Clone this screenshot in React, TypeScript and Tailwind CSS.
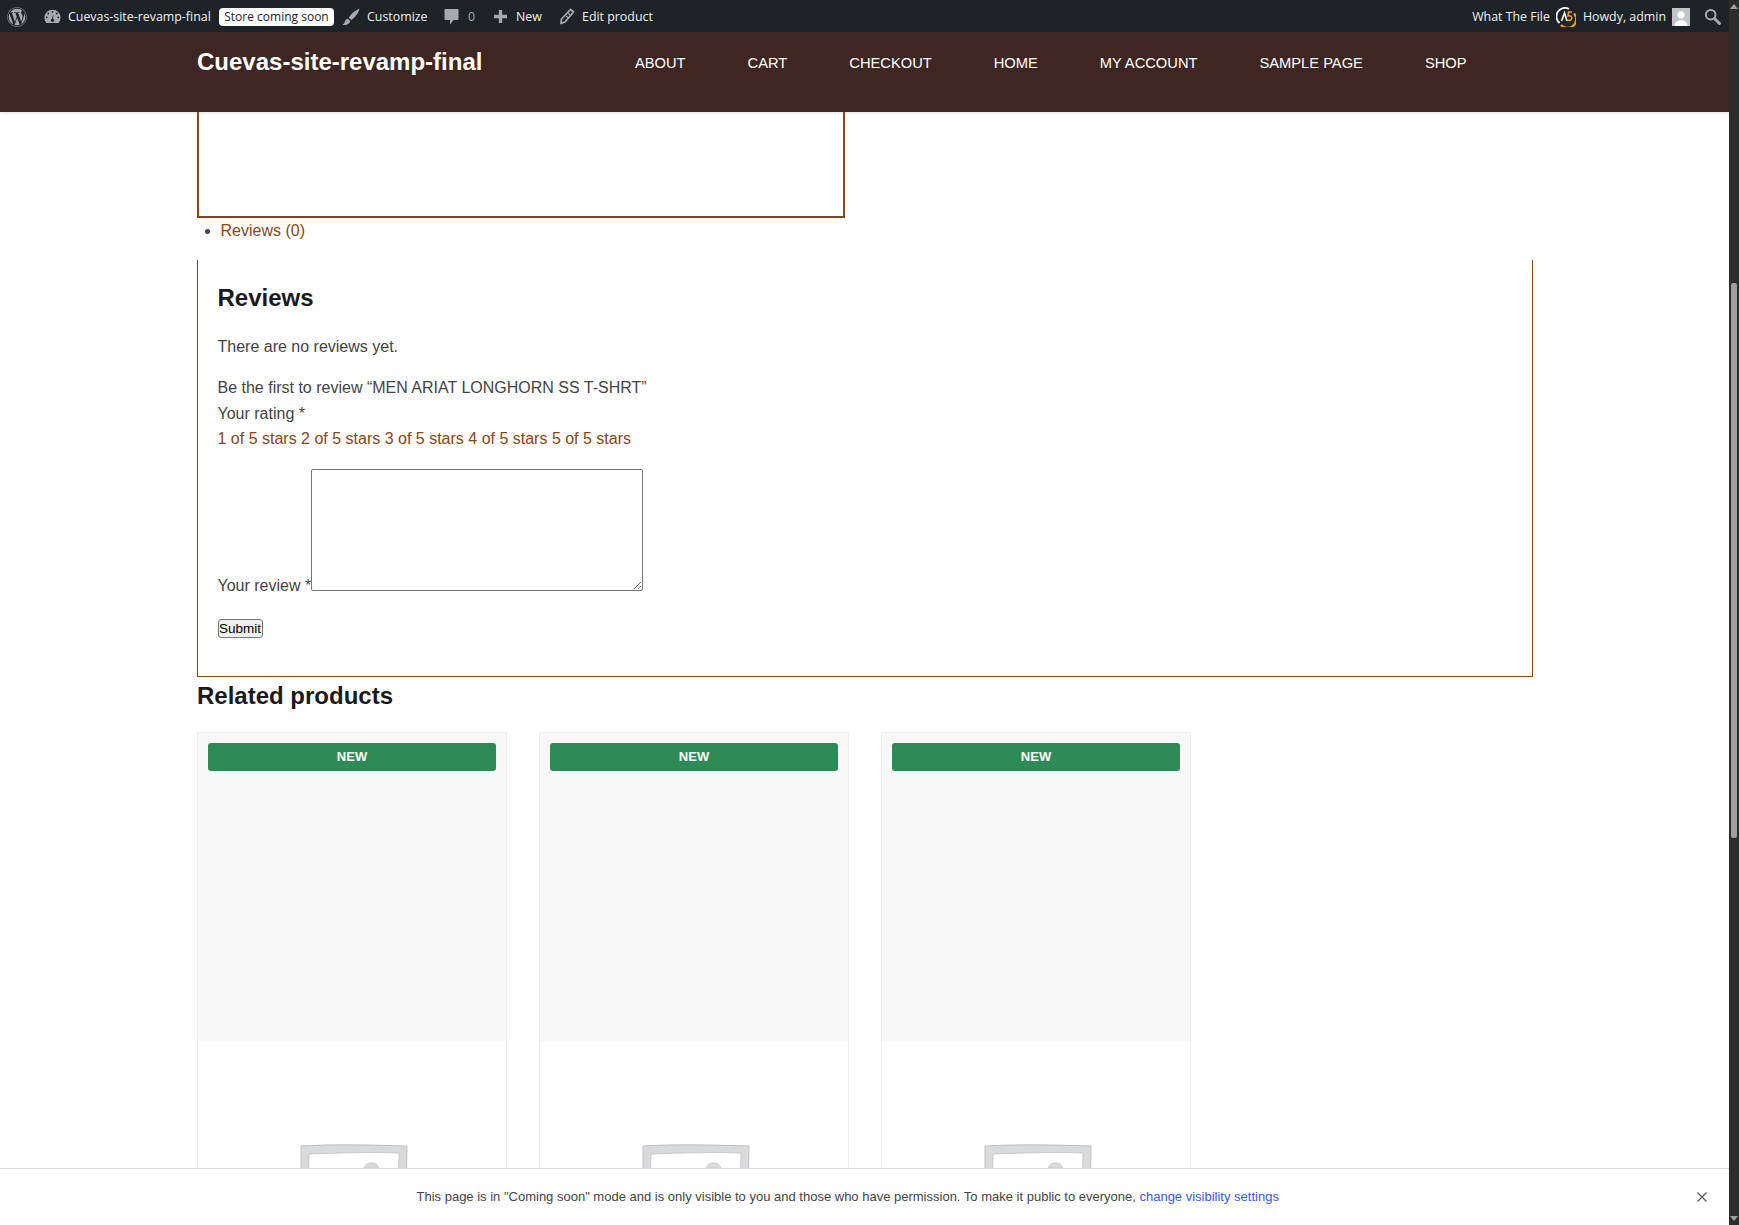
import React from "react";
import { FaWordpress } from "react-icons/fa";

const sans = "font-['Liberation_Sans',Arial,sans-serif]";
const bar = "font-['Open_Sans','Noto_Sans',sans-serif]";

function Gauge() {
  return (
    <svg width="17" height="17" viewBox="0 0 20 20" className="fill-[#a7aaad]">
      <path d="M10 2a9.500 9.500 0 0 0-9.500 9.500c0 2.300.8 4.400 2.200 6h14.600a9.400 9.400 0 0 0 2.200-6A9.500 9.500 0 0 0 10 2z" />
      <circle cx="10" cy="4.500" r="1.100" className="fill-[#1d2327]" />
      <circle cx="5" cy="6.500" r="1.100" className="fill-[#1d2327]" />
      <circle cx="15" cy="6.500" r="1.100" className="fill-[#1d2327]" />
      <circle cx="3.200" cy="11" r="1.100" className="fill-[#1d2327]" />
      <circle cx="16.800" cy="11" r="1.100" className="fill-[#1d2327]" />
      <path d="M11 7l-1.800 6.200 1.600.5z" className="fill-[#1d2327]" />
      <circle cx="10" cy="14.500" r="2" className="fill-[#1d2327]" />
    </svg>
  );
}
function Brush() {
  return (
    <svg width="18" height="18" viewBox="0 0 18 18" className="fill-[#a7aaad]">
      <path d="M17.500.5C14 2 9 5.500 6.800 9.800l2.400 2.200C13 9.500 16.500 5 17.500.5z" />
      <path d="M5.800 10.800c-1.800.3-2.600 1.600-2.900 3-.2 1.200-1 2-2.400 3.200 2.800.3 6.800-.5 7.500-3.600.1-.5 0-1-.2-1z" />
    </svg>
  );
}
function Bubble() {
  return (
    <svg width="15" height="17" viewBox="0 0 15 17" className="fill-[#a7aaad]">
      <path d="M1.500 1h12a1 1 0 0 1 1 1v9a1 1 0 0 1-1 1H9.500L6 16.500V12H1.500a1 1 0 0 1-1-1V2a1 1 0 0 1 1-1z" />
    </svg>
  );
}
function Plus() {
  return (
    <svg width="15" height="15" viewBox="0 0 15 15" className="fill-[#a7aaad]">
      <path d="M5.800 1h3.400v4.800H14v3.400H9.200V14H5.800V9.200H1V5.800h4.800z" />
    </svg>
  );
}
function Pencil() {
  return (
    <svg width="16" height="17" viewBox="0 0 16 17" className="fill-none stroke-[#a7aaad]">
      <path d="M11.500 1.500l3 2.500-8.500 10-4 1.500.5-4.500z" strokeWidth="1.800" strokeLinejoin="round" />
      <path d="M9 5l3 2.500M7 8l2.500 2" strokeWidth="1.200" />
    </svg>
  );
}
function Search() {
  return (
    <svg width="17" height="17" viewBox="0 0 17 17" className="fill-none stroke-[#a7aaad]">
      <circle cx="6.700" cy="6.700" r="4.800" strokeWidth="2" />
      <path d="M10.500 10.500l5 5" strokeWidth="3" strokeLinecap="round" />
    </svg>
  );
}
function Logo() {
  return (
    <svg width="20" height="20" viewBox="0 0 20 20" className="fill-none">
      <path d="M3.500 16A8.500 8.500 0 0 1 13 2" stroke="#fff" strokeWidth="1.800" />
      <path d="M18 6.500a8.500 8.500 0 0 1-13 11.500" stroke="#f59e1b" strokeWidth="2.200" />
      <path d="M5.500 14l3-8 2.500 8" stroke="#fff" strokeWidth="1.600" />
      <path d="M16 5h-3.500l-.5 4c2-.8 4 0 3.800 2.200-.2 2-2.600 2.800-4.300 1.600" stroke="#f59e1b" strokeWidth="1.500" />
    </svg>
  );
}
function Avatar() {
  return (
    <svg width="18" height="18" viewBox="0 0 18 18" className="block">
      <rect width="18" height="18" fill="#c3c4c7" />
      <circle cx="9" cy="6.800" r="3.600" fill="#fff" />
      <path d="M2.500 18c.3-4 3-5.800 6.500-5.800s6.200 1.800 6.500 5.800z" fill="#fff" />
    </svg>
  );
}

function AdminBar() {
  return (
    <div className={`${bar} flex h-8 shrink-0 items-center bg-[#1d2327] pt-[1px] text-[12.400px] text-[#f0f0f1]`}>
      <FaWordpress className="ml-[7px] text-[20px] text-[#a7aaad]" />
      <span className="ml-[17px]"><Gauge /></span>
      <span className="ml-[7px] w-[143px] whitespace-nowrap pt-[1px]">Cuevas-site-revamp-final</span>
      <span className="ml-2 flex h-[18px] w-[115px] items-center justify-center whitespace-nowrap rounded-sm bg-white text-[12px] text-[#1d2327]">Store coming soon</span>
      <span className="ml-2"><Brush /></span>
      <span className="ml-[7px] w-[60px] whitespace-nowrap pt-[1px]">Customize</span>
      <span className="ml-[17px]"><Bubble /></span>
      <span className="ml-[9px] w-[8px] pt-[1px] text-[#a7aaad]">0</span>
      <span className="ml-[17px]"><Plus /></span>
      <span className="ml-[8px] w-[27px] pt-[1px]">New</span>
      <span className="ml-[16px]"><Pencil /></span>
      <span className="ml-[7px] whitespace-nowrap pt-[1px]">Edit product</span>
      <span className="ml-auto whitespace-nowrap pt-[1px]">What The File</span>
      <span className="ml-[6px]"><Logo /></span>
      <span className="ml-[7px] whitespace-nowrap pt-[1px]">Howdy, admin</span>
      <span className="ml-[6px]"><Avatar /></span>
      <span className="ml-[14px] mr-[8px]"><Search /></span>
    </div>
  );
}

const nav = ["About", "Cart", "Checkout", "Home", "My Account", "Sample Page", "Shop"];

function SiteHeader() {
  return (
    <header className={`${sans} flex h-20 shrink-0 bg-[#3e2723] pl-[197px] text-white shadow-[0_1px_3px_rgba(0,0,0,0.12)]`}>
      <div className="w-[438px] pt-[14px] text-[24px] font-bold leading-[32px]">Cuevas-site-revamp-final</div>
      <nav className="flex gap-[62px] pt-[21px] text-[14.700px] uppercase leading-5">
        {nav.map((n) => (
          <span key={n} className="whitespace-nowrap">{n}</span>
        ))}
      </nav>
    </header>
  );
}

function Placeholder() {
  return (
    <svg width="108" height="60" viewBox="0 0 108 60" className="ml-[102px] block">
      <path d="M1 2C35 0 72 1 107 2l-1 58H1z" fill="#d9dadc" stroke="#bfc0c2" strokeWidth="1" />
      <path d="M9 10c28-1 62-2 90-1l-1 51H8z" fill="#fff" stroke="#bfc0c2" strokeWidth="0.800" />
      <path d="M64 24a8 8 0 0 1 15 0z" fill="#d9dadc" stroke="#bfc0c2" strokeWidth="0.600" />
    </svg>
  );
}

function Card() {
  return (
    <div className="h-[700px] w-[310px] border-x border-t border-[#eeeeee]">
      <div className="h-[308px] bg-[#f8f8f8] p-[10px]">
        <div className="flex h-7 items-center justify-center rounded-[3px] bg-[#2e8b57] pb-[1px] text-[13px] font-bold text-white">NEW</div>
      </div>
      <div className="pt-[103px]">
        <Placeholder />
      </div>
    </div>
  );
}

function Content() {
  return (
    <main className={`${sans} min-h-0 flex-1 overflow-hidden pl-[197px] text-[16px] text-[#444444]`}>
      <div className="h-[106px] w-[648px] border-x-2 border-b-2 border-[#8b4513]" />
      <ul className="h-[42px] list-disc pl-[23.500px] pt-[3px] leading-[20px] marker:text-[#444444]">
        <li className="text-[#8b4513]">Reviews (0)</li>
      </ul>
      <section className="h-[417px] w-[1336px] border-x border-b border-[#8b4513] pl-[19.500px] pr-5">
        <h2 className="pt-[24px] text-[24px] font-bold leading-[28px] text-[#1a1a1a]">Reviews</h2>
        <p className="mt-[25px] leading-[20px]">There are no reviews yet.</p>
        <p className="mt-[21px] leading-[20px]">Be the first to review “MEN ARIAT LONGHORN SS T-SHRT”</p>
        <p className="mt-[6px] leading-[20px]">Your rating *</p>
        <p className="mt-[5px] leading-[20px] text-[#8b4513]">1 of 5 stars 2 of 5 stars 3 of 5 stars 4 of 5 stars 5 of 5 stars</p>
        <div className="mt-[20px] flex items-end">
          <span className="whitespace-nowrap leading-[10px]">Your review *</span>
          <textarea className="block h-[122px] w-[332px] rounded-[2px] border border-[#767676] bg-white" readOnly />
        </div>
        <button className="mt-[28px] block h-[19px] w-[45px] rounded-[3px] border border-[#767676] bg-[#efefef] text-[13.500px] leading-[15px] text-black">Submit</button>
      </section>
      <h2 className="pt-[5px] text-[24px] font-bold leading-[28px] text-[#1a1a1a]">Related products</h2>
      <div className="mt-[22px] flex gap-8">
        <Card />
        <Card />
        <Card />
      </div>
    </main>
  );
}

function Notice() {
  return (
    <footer className={`${sans} flex h-[57px] shrink-0 items-center border-t border-[#dddddd] bg-white text-[13px] text-[#444444]`}>
      <p className="ml-[416.500px] whitespace-nowrap">
        This page is in "Coming soon" mode and is only visible to you and those who have permission. To make it public to everyone, <span className="text-[#3858e9]">change visibility settings</span>
      </p>
      <svg width="12" height="12" viewBox="0 0 12 12" className="ml-auto mr-[21px] stroke-[#555555]">
        <path d="M1.500 1.500l9 9M10.500 1.500l-9 9" strokeWidth="1.200" />
      </svg>
    </footer>
  );
}

function Scrollbar() {
  return (
    <div className="flex h-full w-[10px] shrink-0 flex-col bg-[#2c2c2c]">
      <svg width="10" height="10" viewBox="0 0 10 10" className="mt-[2px] shrink-0 fill-[#a0a0a0]">
        <path d="M5 2l4 5H1z" />
      </svg>
      <div className="mt-[271px] ml-[2px] h-[555px] w-[6px] rounded-[2px] bg-[#9f9f9f]" />
      <svg width="10" height="10" viewBox="0 0 10 10" className="mt-auto mb-[2px] shrink-0 fill-[#a0a0a0]">
        <path d="M5 8L1 3h8z" />
      </svg>
    </div>
  );
}

export default function App() {
  return (
    <div className="flex h-[1225px] w-[1739px] overflow-hidden bg-white">
      <div className="flex min-w-0 flex-1 flex-col">
        <AdminBar />
        <SiteHeader />
        <Content />
        <Notice />
      </div>
      <Scrollbar />
    </div>
  );
}
